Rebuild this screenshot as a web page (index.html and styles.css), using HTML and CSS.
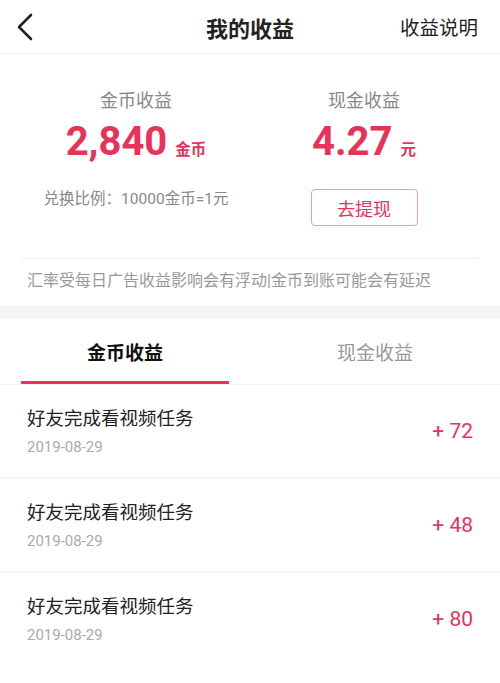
FILE: index.html
```html
<!DOCTYPE html>
<html lang="zh-CN">
<head>
    <meta charset="UTF-8">
    <meta name="viewport" content="width=device-width, initial-scale=1.0">
    <title>我的收益</title>
    <link rel="stylesheet" href="styles.css">
</head>
<body>
    <div class="header">
        <a class="back" href="#">
            <svg width="18" height="28" viewBox="0 0 18 28">
                <path d="M15 2 L3 14 L15 26" fill="none" stroke="#222" stroke-width="2.6" stroke-linecap="round" stroke-linejoin="round"/>
            </svg>
        </a>
        <h1>我的收益</h1>
        <a class="help" href="#">收益说明</a>
    </div>

    <div class="summary">
        <div class="columns">
            <div class="col">
                <div class="label">金币收益</div>
                <div class="amount">2,840<span class="unit">金币</span></div>
                <div class="ratio">兑换比例：10000金币=1元</div>
            </div>
            <div class="col">
                <div class="label">现金收益</div>
                <div class="amount">4.27<span class="unit">元</span></div>
                <button class="withdraw">去提现</button>
            </div>
        </div>
        <div class="notice">汇率受每日广告收益影响会有浮动|金币到账可能会有延迟</div>
    </div>

    <div class="tabs">
        <div class="tab active">金币收益</div>
        <div class="tab">现金收益</div>
    </div>

    <ul class="records">
        <li>
            <div class="info">
                <div class="title">好友完成看视频任务</div>
                <div class="date">2019-08-29</div>
            </div>
            <div class="plus">+ 72</div>
        </li>
        <li>
            <div class="info">
                <div class="title">好友完成看视频任务</div>
                <div class="date">2019-08-29</div>
            </div>
            <div class="plus">+ 48</div>
        </li>
        <li>
            <div class="info">
                <div class="title">好友完成看视频任务</div>
                <div class="date">2019-08-29</div>
            </div>
            <div class="plus">+ 80</div>
        </li>
    </ul>
</body>
</html>
```

FILE: styles.css
```css
body {
    font-family: Roboto, "Noto Sans CJK SC", sans-serif;
    margin: 0;
    padding: 0;
    background-color: #fff;
    color: #222;
}
.header {
    height: 53px;
    display: grid;
    grid-template-columns: 1fr auto 1fr;
    align-items: center;
    padding: 0 22px 0 16px;
    border-bottom: 1px solid #eee;
}
.back {
    display: flex;
}
.header h1 {
    margin: 0;
    font-size: 22px;
    font-weight: bold;
    color: #222;
    padding-left: 6px;
}
.help {
    justify-self: end;
    font-size: 19.5px;
    color: #222;
    text-decoration: none;
}
.summary {
    padding: 0 22px;
}
.columns {
    display: grid;
    grid-template-columns: 1fr 1fr;
    padding-top: 34px;
    padding-bottom: 32px;
    border-bottom: 1px solid #eee;
}
.col {
    display: flex;
    flex-direction: column;
    align-items: center;
}
.label {
    font-size: 18px;
    color: #888;
    line-height: 26px;
}
.amount {
    font-size: 40px;
    font-weight: bold;
    color: #e8325a;
    line-height: 48px;
    margin-top: 4px;
}
.unit {
    font-size: 15.5px;
    margin-left: 8px;
}
.ratio {
    font-size: 15.5px;
    color: #888;
    margin-top: 12px;
}
.withdraw {
    margin-top: 15px;
    width: 107px;
    height: 37px;
    border: 1px solid #f09aae;
    border-radius: 4px;
    background-color: #fff;
    color: #e8325a;
    font-family: inherit;
    font-size: 18px;
    padding: 0;
}
.notice {
    font-size: 16px;
    color: #999;
    line-height: 24px;
    padding: 10px 5px 13px 27px;
    border-bottom: 13px solid #f4f5f7;
    margin: 0 -22px;
}
.tabs {
    display: grid;
    grid-template-columns: 1fr 1fr;
    border-bottom: 1px solid #f3f3f3;
}
.tab {
    height: 65px;
    display: flex;
    align-items: center;
    justify-content: center;
    font-size: 19px;
    color: #999;
    position: relative;
    box-sizing: border-box;
}
.tab.active {
    color: #111;
    font-weight: bold;
}
.tab.active::after {
    content: "";
    position: absolute;
    left: 21px;
    right: 21px;
    bottom: 0;
    height: 3px;
    background-color: #e8325a;
}
.records {
    list-style: none;
    margin: 0;
    padding: 0;
}
.records li {
    height: 92px;
    display: flex;
    align-items: center;
    justify-content: space-between;
    padding: 0 27px;
    border-bottom: 2px solid #f5f5f5;
}
.records li:last-child {
    border-bottom: none;
}
.title {
    font-size: 18.5px;
    color: #222;
    line-height: 26px;
}
.date {
    font-size: 15px;
    color: #aaa;
    margin-top: 6px;
}
.plus {
    font-size: 21px;
    color: #e8325a;
}
```
